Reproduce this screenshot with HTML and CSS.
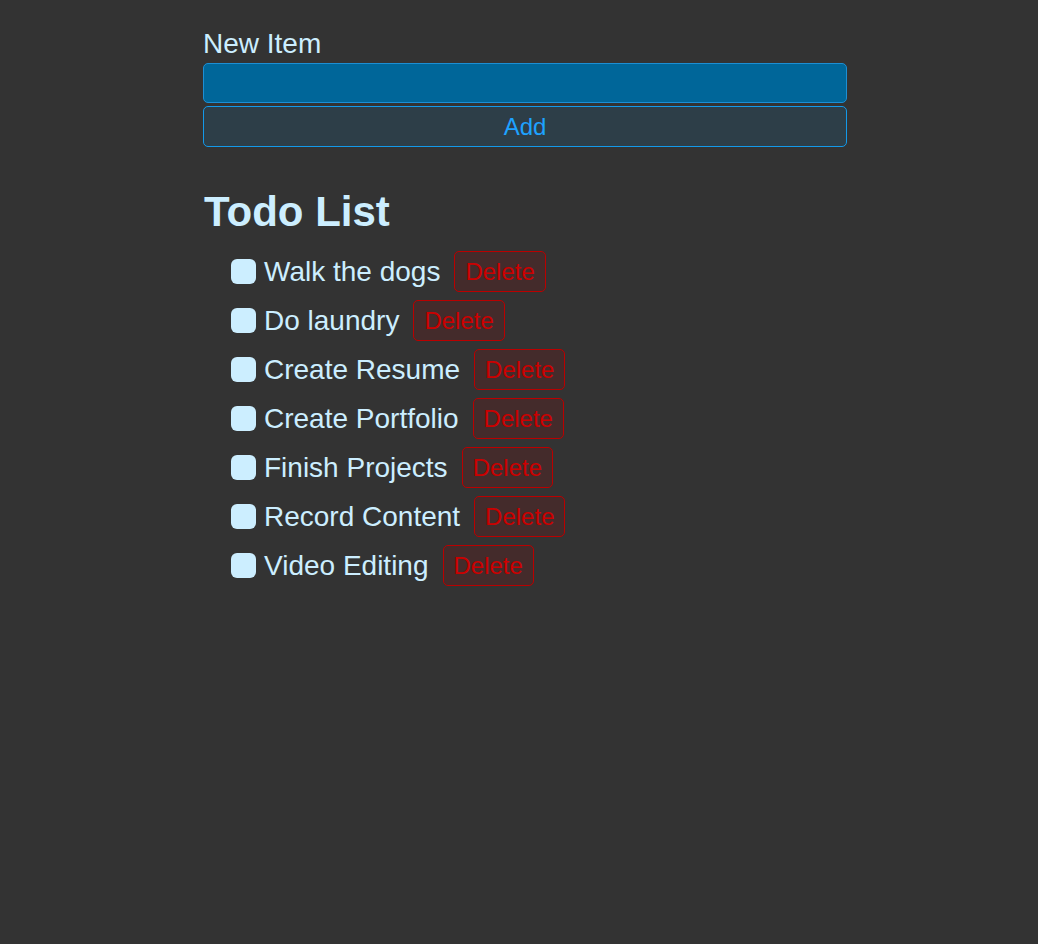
FILE: index.html
```html
<!DOCTYPE html>
<html lang="en">
<head>
<meta charset="utf-8">
<title>Todo List</title>
<link rel="stylesheet" href="styles.css">
</head>
<body>
<main class="app">
  <form class="new-item-form">
    <label class="label" for="item">New Item</label>
    <input class="text-input" type="text" id="item">
    <button class="btn add-btn" type="button">Add</button>
  </form>
  <h1 class="header">Todo List</h1>
  <ul class="list">
    <li class="row"><span class="check"></span><span class="title">Walk the dogs</span><button class="btn delete-btn" type="button">Delete</button></li>
    <li class="row"><span class="check"></span><span class="title">Do laundry</span><button class="btn delete-btn" type="button">Delete</button></li>
    <li class="row"><span class="check"></span><span class="title">Create Resume</span><button class="btn delete-btn" type="button">Delete</button></li>
    <li class="row"><span class="check"></span><span class="title">Create Portfolio</span><button class="btn delete-btn" type="button">Delete</button></li>
    <li class="row"><span class="check"></span><span class="title">Finish Projects</span><button class="btn delete-btn" type="button">Delete</button></li>
    <li class="row"><span class="check"></span><span class="title">Record Content</span><button class="btn delete-btn" type="button">Delete</button></li>
    <li class="row"><span class="check"></span><span class="title">Video Editing</span><button class="btn delete-btn" type="button">Delete</button></li>
  </ul>
</main>
</body>
</html>
```

FILE: styles.css
```css
html, body {
  margin: 0;
  padding: 0;
  background: #333333;
}

body {
  font-family: "Liberation Sans", Arial, sans-serif;
  color: #cceeff;
  font-size: 28px;
}

.app {
  width: 644px;
  margin: 0 auto;
  padding-top: 28px;
  position: relative;
  left: 6px;
}

.new-item-form {
  display: flex;
  flex-direction: column;
  gap: 3px;
}

.label {
  font-size: 28px;
  line-height: 32px;
}

.text-input {
  box-sizing: border-box;
  height: 40px;
  background: #006699;
  border: 1px solid #1c8fd4;
  border-radius: 5px;
  outline: none;
  color: #cceeff;
  font: inherit;
  font-size: 24px;
  padding: 0 10px;
}

.btn {
  font-family: "Liberation Sans", Arial, sans-serif;
  font-size: 24px;
  cursor: pointer;
  border-radius: 5px;
}

.add-btn {
  box-sizing: border-box;
  height: 41px;
  background: #2d3e48;
  border: 1px solid #1399ea;
  color: #1ea2ff;
  padding: 0;
}

.header {
  font-size: 42px;
  font-weight: bold;
  line-height: 48px;
  margin: 41px 0 15px 1px;
}

.list {
  list-style: none;
  margin: 0;
  padding: 0 0 0 28px;
  display: flex;
  flex-direction: column;
  gap: 8px;
}

.row {
  display: flex;
  align-items: center;
  height: 41px;
}

.check {
  width: 25px;
  height: 25px;
  border-radius: 6px;
  background: #cceeff;
  margin-right: 8px;
  flex: none;
}

.title {
  font-size: 28px;
  margin-right: 14px;
}

.delete-btn {
  box-sizing: border-box;
  height: 41px;
  padding: 0 10px;
  background: #442b2b;
  border: 1px solid #bb0000;
  color: #cc0000;
}
```
